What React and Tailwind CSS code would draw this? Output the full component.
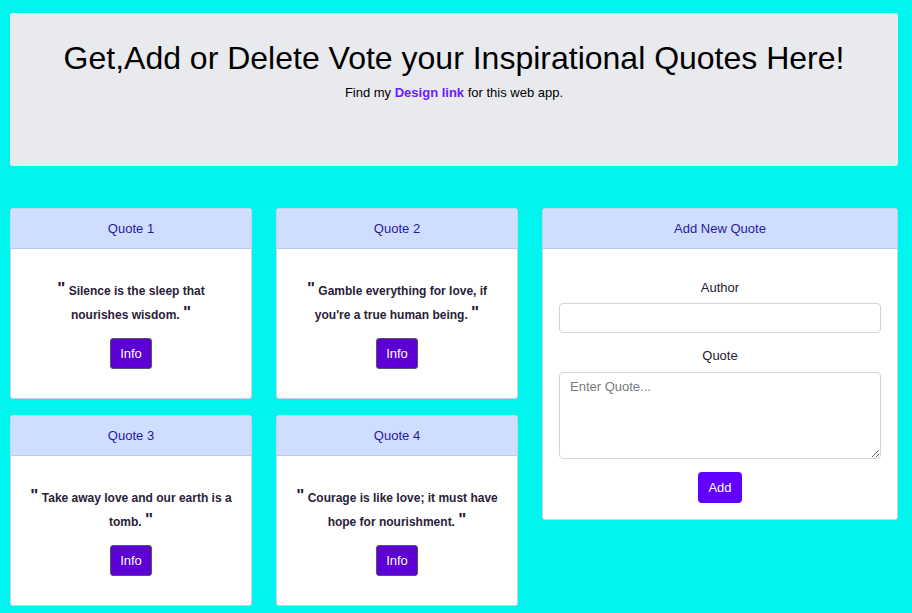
import { useState } from 'react';

const quotes = [
  { id: 1, text: 'Silence is the sleep that nourishes wisdom.' },
  { id: 2, text: "Gamble everything for love, if you're a true human being." },
  { id: 3, text: 'Take away love and our earth is a tomb.' },
  { id: 4, text: 'Courage is like love; it must have hope for nourishment.' },
];

function QuoteCard({ quote }) {
  return (
    <div className="flex h-[191px] flex-col overflow-hidden rounded-[3px] border border-[#c9d3e6] bg-white">
      <div className="flex h-[40px] shrink-0 items-center justify-center border-b border-[#b9c9f5] bg-[#cfdefe] text-[13px] text-[#2a1a9e]">
        Quote {quote.id}
      </div>
      <div className="flex flex-1 flex-col items-center px-[16px] pt-[30px]">
        <p className="text-center text-[12px] font-bold leading-[24px] text-[#2a2138]">
          <span className="align-[1px] text-[17px] leading-none">"</span> {quote.text}{' '}
          <span className="align-[1px] text-[17px] leading-none">"</span>
        </p>
        <button
          type="button"
          className="mt-[11px] h-[31px] w-[42px] rounded-[3px] border border-[#55556a] bg-[#5c00d6] text-[13px] text-white"
        >
          Info
        </button>
      </div>
    </div>
  );
}

function AddQuoteForm() {
  const [author, setAuthor] = useState('');
  const [text, setText] = useState('');

  return (
    <div className="flex h-[312px] flex-col overflow-hidden rounded-[3px] border border-[#c9d3e6] bg-white">
      <div className="flex h-[40px] shrink-0 items-center justify-center border-b border-[#b9c9f5] bg-[#cfdefe] text-[13px] text-[#2a1a9e]">
        Add New Quote
      </div>
      <div className="flex flex-col items-center px-[16px] pt-[31px]">
        <label className="text-[13px] leading-[16px] text-[#1f1a2e]">Author</label>
        <input
          value={author}
          onChange={(e) => setAuthor(e.target.value)}
          className="mt-[7px] h-[30px] w-full rounded-[4px] border border-[#cfd3da] bg-white px-[10px] text-[13px] outline-none"
        />
        <label className="mt-[15px] text-[13px] leading-[16px] text-[#1f1a2e]">Quote</label>
        <textarea
          value={text}
          onChange={(e) => setText(e.target.value)}
          placeholder="Enter Quote..."
          className="mt-[8px] h-[87px] w-full rounded-[4px] border border-[#cfd3da] bg-white px-[10px] py-[4px] text-[13px] text-[#333] outline-none placeholder:text-[#777a80]"
        />
        <button
          type="button"
          className="mt-[13px] h-[31px] w-[44px] rounded-[4px] bg-[#6200ff] text-[13px] text-white"
        >
          Add
        </button>
      </div>
    </div>
  );
}

export default function App() {
  return (
    <div className="min-h-[613px] bg-[#00f5ee] px-[10px] pt-[13px] pb-[8px] font-['Liberation_Sans',Arial,sans-serif]">
      <div className="flex h-[153px] w-[888px] flex-col items-center rounded-[3px] bg-[#e9eaee] pt-[26px]">
        <h1 className="text-[32px] leading-[38px] text-black">
          Get,Add or Delete Vote your Inspirational Quotes Here!
        </h1>
        <p className="mt-[8px] text-[13px] leading-[16px] text-black">
          Find my{' '}
          <a href="#" className="font-bold text-[#6a1bff]">
            Design link
          </a>{' '}
          for this web app.
        </p>
      </div>

      <div className="mt-[42px] grid w-[888px] grid-cols-[242px_242px_356px] items-start gap-x-[24px]">
        <div className="col-span-2 grid grid-cols-[242px_242px] gap-x-[24px] gap-y-[16px]">
          {quotes.map((q) => (
            <QuoteCard key={q.id} quote={q} />
          ))}
        </div>
        <AddQuoteForm />
      </div>
    </div>
  );
}
